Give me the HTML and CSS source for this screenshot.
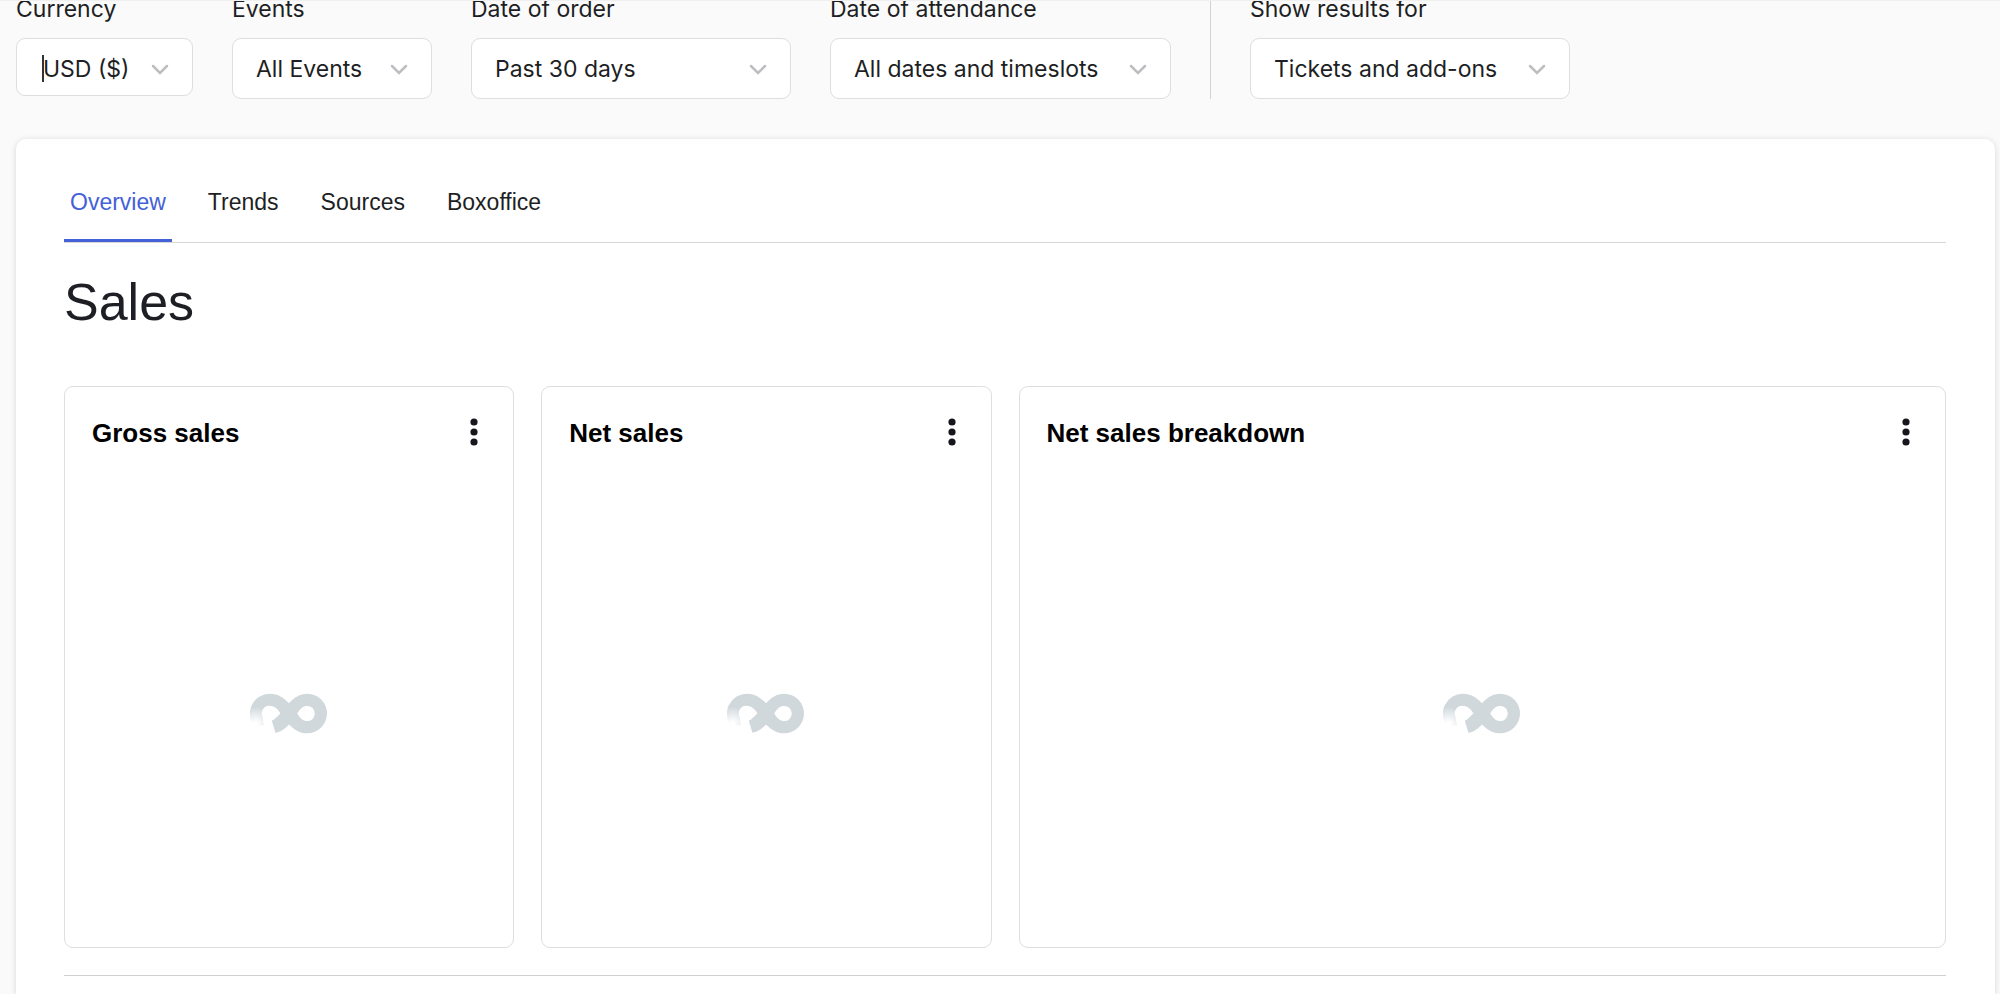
FILE: index.html
```html
<!DOCTYPE html>
<html lang="en">
<head>
  <meta charset="UTF-8" />
  <meta name="viewport" content="width=device-width, initial-scale=1.0"/>
  <title>Sales overview</title>
  <link rel="stylesheet" href="styles.css">
</head>
<body>
  <!-- shared icons -->
  <svg class="sprite" aria-hidden="true">
    <defs>
      <radialGradient id="fade" gradientUnits="userSpaceOnUse" cx="57" cy="162" r="62">
        <stop offset="0.1" stop-color="#d0d8dc" stop-opacity="0"/>
        <stop offset="0.85" stop-color="#d0d8dc"/>
      </radialGradient>
    </defs>
    <symbol id="chevron" viewBox="0 0 18 12">
      <path d="M2 2l7 7 7-7" fill="none" stroke="#bdbec2" stroke-width="2.5" stroke-linecap="round"/>
    </symbol>
    <symbol id="dots" viewBox="0 0 8 28">
      <circle cx="4" cy="4" r="3.6"/>
      <circle cx="4" cy="14" r="3.6"/>
      <circle cx="4" cy="24" r="3.6"/>
    </symbol>
    <symbol id="loader" viewBox="41 68 234 124">
      <path fill="url(#fade)" fill-rule="evenodd" d="M55 170A60 60 0 0 1 101 70C125 70 142 82 158 99C173 82 190 70 213 70A60 60 0 0 1 213 190C190 190 173 178 158 163C147 175 133 186 117 188L106 152C115 147 124 138 132 129C124 115 113 107 101 107A23 23 0 0 0 78 140L82 165ZM183 130C192 115 200 107 213 107A23 23 0 0 1 213 153C200 153 192 144 183 130Z"/>
    </symbol>
  </svg>

  <form class="filters">
    <div class="filter">
      <label for="currency">Currency</label>
      <div class="select select-currency">
        <select id="currency"><option>USD ($)</option></select>
        <span class="caret"></span>
        <svg class="chevron"><use href="#chevron"/></svg>
      </div>
    </div>
    <div class="filter">
      <label for="events">Events</label>
      <div class="select select-events">
        <select id="events"><option>All Events</option></select>
        <svg class="chevron"><use href="#chevron"/></svg>
      </div>
    </div>
    <div class="filter">
      <label for="order">Date of order</label>
      <div class="select">
        <select id="order"><option>Past 30 days</option></select>
        <svg class="chevron"><use href="#chevron"/></svg>
      </div>
    </div>
    <div class="filter">
      <label for="attendance">Date of attendance</label>
      <div class="select select-attendance">
        <select id="attendance"><option>All dates and timeslots</option></select>
        <svg class="chevron"><use href="#chevron"/></svg>
      </div>
    </div>
    <div class="filter filter-results">
      <label for="results">Show results for</label>
      <div class="select">
        <select id="results"><option>Tickets and add-ons</option></select>
        <svg class="chevron"><use href="#chevron"/></svg>
      </div>
    </div>
  </form>

  <main class="panel">
    <nav class="tabs">
      <a href="#overview" class="active">Overview</a>
      <a href="#trends">Trends</a>
      <a href="#sources">Sources</a>
      <a href="#boxoffice">Boxoffice</a>
    </nav>

    <h1>Sales</h1>

    <section class="cards">
      <article class="card">
        <header>
          <h2>Gross sales</h2>
          <button type="button" aria-label="Gross sales options"><svg class="dots"><use href="#dots"/></svg></button>
        </header>
        <div class="loading"><svg class="loader"><use href="#loader"/></svg></div>
      </article>
      <article class="card">
        <header>
          <h2>Net sales</h2>
          <button type="button" aria-label="Net sales options"><svg class="dots"><use href="#dots"/></svg></button>
        </header>
        <div class="loading"><svg class="loader"><use href="#loader"/></svg></div>
      </article>
      <article class="card card-wide">
        <header>
          <h2>Net sales breakdown</h2>
          <button type="button" aria-label="Net sales breakdown options"><svg class="dots"><use href="#dots"/></svg></button>
        </header>
        <div class="loading"><svg class="loader"><use href="#loader"/></svg></div>
      </article>
    </section>

    <hr>
  </main>
</body>
</html>
```

FILE: styles.css
```css
:root {
  --text: #1e1f24;
  --blue: #4461d7;
  --border: #dededf;
}

* {
  margin: 0;
  padding: 0;
  box-sizing: border-box;
}

body {
  height: 100vh;
  overflow: hidden;
  display: flex;
  flex-direction: column;
  background: #fafafa;
  border-top: 1px solid #f0f0f0;
  color: var(--text);
  font-family: "Liberation Sans", Arial, sans-serif;
}

.sprite {
  position: absolute;
  width: 0;
  height: 0;
}

/* filters */
.filters {
  display: flex;
  gap: 39px;
  padding: 0 16px;
  font-family: Inter, sans-serif;
}

.filter label {
  display: block;
  margin-bottom: 21px;
  font-size: 23px;
  line-height: 16px;
}

.filter-results {
  padding-left: 39px;
  border-left: 1px solid #d2d2d4;
}

.select {
  position: relative;
  width: 320px;
  height: 61px;
}

.select-currency {
  width: 177px;
  height: 58px;
}

.select-events {
  width: 200px;
}

.select-attendance {
  width: 341px;
}

.select select {
  appearance: none;
  width: 100%;
  height: 100%;
  padding: 1px 23px 0;
  border: 1px solid var(--border);
  border-radius: 9px;
  background: #fff;
  color: var(--text);
  font: inherit;
  font-size: 23px;
}

.select-currency select {
  padding: 4px 26px 0;
}

.chevron {
  position: absolute;
  top: 26px;
  right: 24px;
  width: 18px;
  height: 12px;
  pointer-events: none;
}

.caret {
  position: absolute;
  top: 17px;
  left: 26px;
  width: 2px;
  height: 27px;
  background: #333;
}

/* panel */
.panel {
  flex: 1 0 auto;
  margin: 40px 5px 0 16px;
  padding: 28px 49px 0 48px;
  background: #fff;
  border-radius: 10px 10px 0 0;
  box-shadow: 0 1px 6px rgba(0, 0, 0, 0.14);
}

.tabs {
  display: flex;
  gap: 30px;
  border-bottom: 1px solid #d8d8da;
}

.tabs a {
  padding: 21px 6px 23px;
  border-bottom: 3px solid transparent;
  color: var(--text);
  font-size: 23px;
  line-height: 28px;
  text-decoration: none;
}

.tabs a.active {
  border-color: var(--blue);
  color: var(--blue);
}

h1 {
  margin: 27px 0 52px;
  font-size: 52px;
  font-weight: 400;
  line-height: 64px;
}

.cards {
  display: grid;
  grid-template-columns: repeat(4, 1fr);
  gap: 27px;
}

.card {
  display: flex;
  flex-direction: column;
  height: 562px;
  padding: 24px 27px;
  border: 1px solid var(--border);
  border-radius: 9px;
}

.card-wide {
  grid-column: span 2;
}

.card header {
  display: flex;
  justify-content: space-between;
  align-items: center;
}

.card h2 {
  color: #000;
  font-size: 26px;
  line-height: 44px;
}

.card button {
  width: 24px;
  height: 40px;
  padding-bottom: 2px;
  border: 0;
  background: none;
}

.dots {
  display: block;
  margin: 0 auto;
  width: 8px;
  height: 28px;
  fill: #16171c;
}

.loading {
  flex: 1;
  display: flex;
  justify-content: center;
  align-items: center;
  padding-top: 48px;
}

.loader {
  width: 78px;
  height: 41px;
}

hr {
  margin-top: 27px;
  border: 0;
  border-top: 1px solid #d0d0d2;
}
```
